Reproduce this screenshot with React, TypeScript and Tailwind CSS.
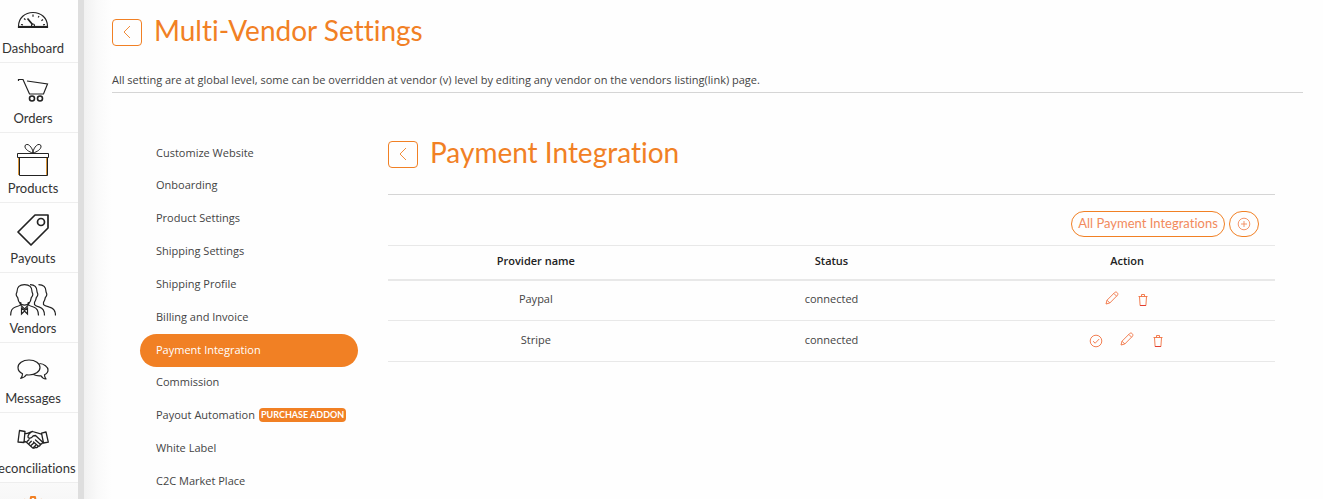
import React from 'react';

const sideItems = [
  { label: 'Dashboard', icon: <GaugeIcon /> },
  { label: 'Orders', icon: <CartIcon /> },
  { label: 'Products', icon: <GiftIcon /> },
  { label: 'Payouts', icon: <TagIcon /> },
  { label: 'Vendors', icon: <PeopleIcon /> },
  { label: 'Messages', icon: <ChatIcon /> },
  { label: 'Reconciliations', icon: <HandshakeIcon /> },
];

const settings = [
  { label: 'Customize Website' },
  { label: 'Onboarding' },
  { label: 'Product Settings' },
  { label: 'Shipping Settings' },
  { label: 'Shipping Profile' },
  { label: 'Billing and Invoice' },
  { label: 'Payment Integration', active: true },
  { label: 'Commission' },
  { label: 'Payout Automation', badge: 'PURCHASE ADDON' },
  { label: 'White Label' },
  { label: 'C2C Market Place' },
];

const providers = [
  { name: 'Paypal', status: 'connected', isDefault: false },
  { name: 'Stripe', status: 'connected', isDefault: true },
];

function GaugeIcon() {
  return (
    <svg viewBox="0 0 32 32" className="w-8 h-8" fill="none" stroke="currentColor" strokeWidth="1.2">
      <path d="M1.5 23.5v-1C1.5 14 8 8.500 16 8.500S30.500 14 30.500 22.500v1z" />
      <path d="M1.500 22.500h29" />
      <path d="M4 20.500l2 .4M7 14.500l1.500 1.200M16 10.500v2.200M22 12l-.8 1.600M26 15.500l-1.600 1.200M28 20.500l-2 .4" />
      <path d="M10.500 14.500l5 6" strokeWidth="1.700" />
      <circle cx="16" cy="21.500" r="1.500" />
    </svg>
  );
}

function CartIcon() {
  return (
    <svg viewBox="0 0 32 32" className="w-8 h-8" fill="none" stroke="currentColor" strokeWidth="1.200">
      <path d="M1.500 7V5.500h4.500l6.500 14.500h14L30.500 10 10 7" />
      <circle cx="15" cy="24.500" r="2.500" strokeWidth="1.600" />
      <circle cx="23" cy="24.500" r="2.500" strokeWidth="1.600" />
    </svg>
  );
}

function GiftIcon() {
  return (
    <svg viewBox="0 0 32 32" className="w-8 h-8" fill="none" stroke="currentColor" strokeWidth="1">
      <path d="M.5 9.500h31v4H.5zM2.500 13.500v18h28v-18" />
      <path d="M16 9C12 8 7.500 5 8 2c.3-2 3-2 4.500-.5C14.500 3.500 16 6 16 9c0-3 1.500-5.500 3.500-7.500C21 0 23.700 0 24 2c.5 3-4 6-8 7z" />
      <path d="M1.500 14v17M29.500 14v17" stroke="#d9963c" strokeWidth="1" />
    </svg>
  );
}

function TagIcon() {
  return (
    <svg viewBox="0 0 32 32" className="w-8 h-8" fill="none" stroke="currentColor" strokeWidth="1.700" strokeLinejoin="round">
      <path d="M18 1h13v13L14 31 1 18z" />
      <circle cx="24" cy="8" r="3.500" />
    </svg>
  );
}

function PeopleIcon() {
  return (
    <svg viewBox="0 0 46 32" className="w-[46px] h-8" fill="none" stroke="currentColor" strokeWidth="1.200">
      <path d="M14.500.6c-5 0-7.500 2.500-7.500 7 0 1-.8 1.500-.8 3s1 2.300 1.500 3c.6 4 3 7.500 6.800 7.500s6.200-3.500 6.800-7.500c.5-.7 1.500-1.500 1.500-3s-.8-2-.8-3c0-4.500-2.500-7-7.500-7z" />
      <path d="M.6 31.500c0-5 1.400-7.500 4.900-8.500 2-.5 4-1 5.200-2.500V18M18.300 18v2.500c1.200 1.500 3.200 2 5.200 2.500 3.500 1 5 3.500 5 8.500" />
      <path d="M10.500 21l4 4 4-4" />
      <path d="M11.500 24v6l3-3 3 3v-6l-3 2.500z" />
      <path d="M20 .6c5 0 7 2.500 7 7 0 1 .8 1.500.8 3s-1 2.300-1.500 3c-.3 2-1 3.600-1.800 4.800v2.200c1.200 1.500 3 2 5 2.500 3.500 1 5 3.500 5 8.400" />
      <path d="M28.500.6c5 0 7.500 2.500 7.500 7 0 1 .8 1.500.8 3s-1 2.300-1.500 3c-.3 2-1 3.600-1.800 4.800v2.200c1.200 1.500 4 2 6 2.500 4.500 1 6 3.500 6 8.400" />
    </svg>
  );
}

function ChatIcon() {
  return (
    <svg viewBox="0 0 32 32" className="w-8 h-8" fill="none" stroke="currentColor" strokeWidth="1.200" strokeLinejoin="round">
      <path d="M12 6C5.500 6 1 9.500 1 13.500c0 2.700 1.800 4.900 4.500 6.200 0 1.800-.5 3.300-1.800 4.600 2.600-.3 4.500-1.700 5.600-3.500 1 .1 1.700.2 2.700.2 6 0 11-3.300 11-7.500S18.500 6 12 6z" />
      <path d="M22.500 9.500c4.500.3 8.500 3.300 8.500 6.500 0 2-1.200 3.700-3.500 4.800 0 1.700.4 3 1.500 4.200-2.300-.2-4-1.300-5-3.200-3 .3-5.500-.2-7.500-1.300" />
    </svg>
  );
}

function HandshakeIcon() {
  return (
    <svg viewBox="0 0 32 32" className="w-8 h-8" fill="none" stroke="currentColor" strokeWidth="1.300" strokeLinejoin="round" strokeLinecap="round">
      <path d="M2.500 6.500l5.500 1-1 11-6-.5z" />
      <path d="M29 8l-4.500 1.200 2 9.800 4.800-.8z" />
      <path d="M8 9.500c3 .4 4.500-1.500 7.500-2l9 2.700M15.500 7.500c-2.500 1-4.800 3.500-4.500 5.500s3.500 1.500 5-1l2.500-.5 7 6.500" />
      <path d="M7.200 17.500l2 .5 6 5.500c1 1 2.500 1 3-.3 1.500 1 2.800 0 2.800-1.200 1.500.5 2.600-.5 2.300-1.800 1.500 0 2.500-1 2.200-2.200" />
      <path d="M10 17.500l2-1.800M12 19.500l2.300-2.200M14 21.500l2.500-2.300M16.500 23.500l2-2M18.500 16l4.800 4.200M16.500 18l4.500 4" />
    </svg>
  );
}

function GearIcon() {
  return (
    <svg viewBox="0 0 32 32" className="w-8 h-8" fill="none" stroke="currentColor" strokeWidth="2" strokeLinejoin="round">
      <path d="M13.500 5.500L14 2h4l.5 3.500 3 1.300 2.700-2 3 3-2 2.700 1.300 3 3.500.5v4l-3.500.5-1.300 3 2 2.700-3 3-2.700-2-3 1.300L18 30h-4l-.5-3.500-3-1.300-2.700 2-3-3 2-2.700-1.300-3L2 18v-4l3.500-.5 1.300-3-2-2.700 3-3 2.700 2z" />
      <circle cx="16" cy="16" r="5" />
    </svg>
  );
}

function PencilIcon() {
  return (
    <svg viewBox="0 0 14 14" className="w-3.5 h-3.5" fill="none" stroke="currentColor" strokeWidth=".9" strokeLinejoin="round">
      <path d="M1 13l1-3.800L9.800 1.400c1.500-1.300 4 1 2.700 2.800L4.800 12zM8.800 2.400l2.800 2.800M2 9.200L4.800 12" />
    </svg>
  );
}

function TrashIcon() {
  return (
    <svg viewBox="0 0 14 14" className="w-3.5 h-3.5" fill="none" stroke="currentColor" strokeWidth=".9">
      <path d="M2.500 3.500h9M5.500 3.500v-2h3v2M3.500 3.500l.6 9h5.800l.6-9" />
      <path d="M4.100 12.500h5.800" stroke="#e0342c" />
    </svg>
  );
}

function CheckIcon() {
  return (
    <svg viewBox="0 0 14 14" className="w-3.5 h-3.5" fill="none" stroke="currentColor" strokeWidth=".9">
      <circle cx="7" cy="7" r="5.800" />
      <path d="M4 7.200l2.200 2L10.200 5" />
    </svg>
  );
}

function BackButton() {
  return (
    <button
      type="button"
      aria-label="Back"
      className="flex h-[27px] w-[30px] items-center justify-center rounded border border-[#f18024] text-[#f18024]"
    >
      <svg viewBox="0 0 12 12" className="w-3 h-3" fill="none" stroke="currentColor" strokeWidth=".9">
        <path d="M9 0L3 6l6 6" />
      </svg>
    </button>
  );
}

export default function App(): React.JSX.Element {
  return (
    <div className="flex h-screen overflow-hidden bg-[#fefefe] font-['Open_Sans',sans-serif] text-[11px] text-[#444] [font-variant-ligatures:none]">
      {/* Side menu */}
      <nav className="w-[84px] shrink-0 overflow-hidden border-r-[6px] border-[#dedede] text-[#222]">
        <ul className="-mt-[7px]">
          {sideItems.map((item) => (
            <li key={item.label} className="h-[70px] border-b border-[#eee]">
              <a href="#" className="flex flex-col items-center pt-[11px] pr-3">
                {item.icon}
                <span className="font-[Lato,sans-serif] text-[13px] leading-6 whitespace-nowrap text-[#333]">
                  {item.label}
                </span>
              </a>
            </li>
          ))}
          <li className="h-[70px] bg-gradient-to-b from-[#fafafa] to-[#eee]">
            <a href="#" aria-label="Settings" className="flex flex-col items-center pt-3 pr-3 text-[#f18024]">
              <GearIcon />
            </a>
          </li>
        </ul>
      </nav>

      <div className="w-7 shrink-0 bg-gradient-to-r from-[#f1f1f1] via-[#fafafa] to-[#fefefe]" />

      <main className="min-w-0 flex-1 pr-5">
        <header className="border-b border-[#d5d5d5] pt-3.5">
          <div className="flex items-center gap-3">
            <BackButton />
            <h1 className="pb-1 font-[Lato,sans-serif] text-[28px] leading-8 text-[#f18024]">Multi-Vendor Settings</h1>
          </div>
          <p className="pt-[22px] pb-1 leading-4">
            All setting are at global level, some can be overridden at vendor (v) level by editing any vendor on the
            vendors listing(link) page.
          </p>
        </header>

        <div className="flex gap-[30px] px-7 pt-[43px]">
          <ul className="mt-px flex h-[361px] w-[218px] shrink-0 flex-col">
            {settings.map((item) => (
              <li key={item.label} className="flex-1">
                <a
                  href="#"
                  className={
                    item.active
                      ? 'flex h-full items-center rounded-full bg-[#f18024] px-4 pb-px text-white'
                      : 'flex h-full items-center gap-1 px-4 pb-px whitespace-nowrap'
                  }
                >
                  {item.label}
                  {item.badge && (
                    <span className="rounded bg-[#f18024] px-0.5 font-[Lato,sans-serif] text-[9px] leading-[14px] font-bold text-white">
                      {item.badge}
                    </span>
                  )}
                </a>
              </li>
            ))}
          </ul>

          <section className="min-w-0 flex-1">
            <div className="flex items-center gap-3 border-b border-[#d5d5d5] pb-[22px]">
              <BackButton />
              <h2 className="pb-1 font-[Lato,sans-serif] text-[28px] leading-8 text-[#f18024]">Payment Integration</h2>
            </div>
            <div className="flex justify-end gap-1 pt-4 pr-4 pb-2 text-[#f18024]">
              <button
                type="button"
                className="h-[26px] w-[154px] rounded-full border border-[#f18024] pb-0.5 font-[Lato,sans-serif] text-[13px] leading-5 whitespace-nowrap text-[#f28a5c]"
              >
                All Payment Integrations
              </button>
              <button
                type="button"
                aria-label="Add"
                className="flex h-[26px] w-[30px] items-center justify-center rounded-full border border-[#f18024]"
              >
                <svg viewBox="0 0 14 14" className="w-3.5 h-3.5" fill="none" stroke="#f28a5c" strokeWidth=".9">
                  <circle cx="7" cy="7" r="5.800" />
                  <path d="M7 4v6M4 7h6" />
                </svg>
              </button>
            </div>

            <table className="w-full table-fixed border-collapse text-center">
              <thead>
                <tr className="h-[34px] border-t border-b-2 border-[#e8e8e8] text-[#222]">
                  <th className="pb-0.5 font-semibold">Provider name</th>
                  <th className="pb-0.5 font-semibold">Status</th>
                  <th className="pb-0.5 font-semibold">Action</th>
                </tr>
              </thead>
              <tbody>
                {providers.map((p) => (
                  <tr key={p.name} className="h-[41px] border-b border-[#e8e8e8]">
                    <td className="pb-0.5">{p.name}</td>
                    <td className="pb-0.5">{p.status}</td>
                    <td>
                      <div className="flex items-center justify-center gap-[17px] text-[#f0703f]">
                        {p.isDefault && (
                          <button type="button" aria-label="Default">
                            <CheckIcon />
                          </button>
                        )}
                        <button type="button" aria-label="Edit" className="pb-1">
                          <PencilIcon />
                        </button>
                        <button type="button" aria-label="Delete">
                          <TrashIcon />
                        </button>
                      </div>
                    </td>
                  </tr>
                ))}
              </tbody>
            </table>
          </section>
        </div>
      </main>
    </div>
  );
}
